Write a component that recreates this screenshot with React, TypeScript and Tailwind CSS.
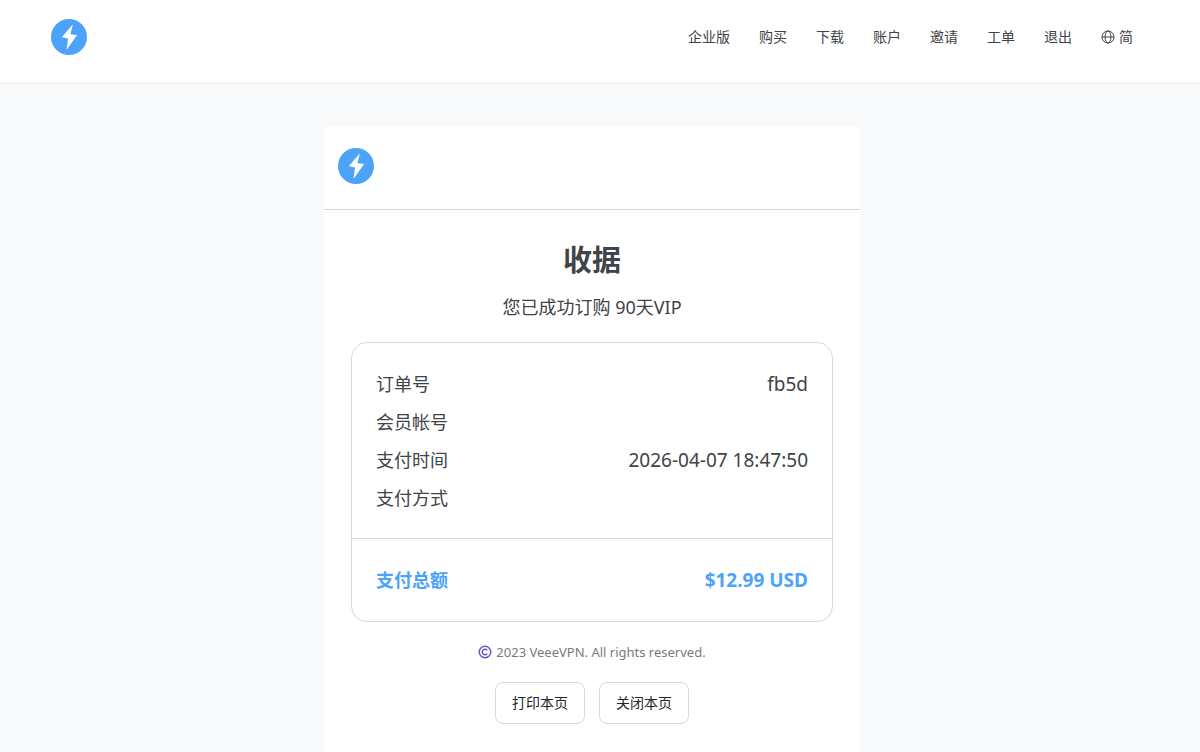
type LogoProps = {
  className?: string;
};

const Logo = ({ className }: LogoProps) => (
  <svg viewBox="0 0 36 36" className={className} aria-hidden="true">
    <circle cx="18" cy="18" r="18" fill="#4da3f9" />
    <path d="M21.9 5.3 10.8 18.2 17 19.5 15.5 31 26.1 15.9 19.4 15.2Z" fill="#fff" />
  </svg>
);

const GlobeIcon = () => (
  <svg viewBox="0 0 14 14" className="size-3.5" fill="none" stroke="currentColor" aria-hidden="true">
    <circle cx="7" cy="7" r="6" />
    <ellipse cx="7" cy="7" rx="2.9" ry="6" />
    <path d="M1 7H13" />
  </svg>
);

const CopyrightIcon = () => (
  <svg viewBox="0 0 14 14" className="size-3.5" fill="none" stroke="#6c55c4" strokeWidth="1.4" aria-hidden="true">
    <circle cx="7" cy="7" r="5.8" />
    <path d="M9.2 5.2A2.8 2.8 0 1 0 9.2 8.8" strokeWidth="1.5" />
  </svg>
);

const navLinks = ["企业版", "购买", "下载", "账户", "邀请", "工单", "退出"];

const orderRows = [
  { label: "订单号", value: "fb5d" },
  { label: "会员帐号", value: "" },
  { label: "支付时间", value: "2026-04-07 18:47:50" },
  { label: "支付方式", value: "" },
];

const Header = () => (
  <header className="flex h-21 items-start justify-between border-b border-[#e6e8ea] bg-white pt-[19px] pr-[67px] pl-[51px]">
    <a href="#" aria-label="VeeeVPN">
      <Logo className="size-9" />
    </a>
    <nav className="flex h-9 items-center gap-[29px] text-sm">
      {navLinks.map((title) => (
        <a key={title} href="#">
          {title}
        </a>
      ))}
      <button type="button" className="flex items-center gap-1">
        <GlobeIcon />
        简
      </button>
    </nav>
  </header>
);

const Receipt = () => (
  <section className="w-full max-w-[536px] bg-white pb-10">
    <div className="border-b border-[#d3d5d8] px-3.5 pt-[21px] pb-[25px]">
      <Logo className="size-9" />
    </div>

    <div className="px-[27px] pt-7 text-center">
      <h1 className="text-[29px] leading-11 font-bold">收据</h1>
      <p className="mt-[11px] text-lg leading-7">您已成功订购 90天VIP</p>

      <table className="mt-[21px] w-full border-separate border-spacing-0 rounded-2xl border border-[#d6d8da] text-lg leading-[22px]">
        <tbody>
          <tr aria-hidden="true">
            <td colSpan={2} className="h-[22px]"></td>
          </tr>
          {orderRows.map((row) => (
            <tr key={row.label} className="h-[38px]">
              <th scope="row" className="pl-6 text-left font-normal">
                {row.label}
              </th>
              <td className="pr-6 text-right text-[19px]">{row.value}</td>
            </tr>
          ))}
          <tr aria-hidden="true">
            <td colSpan={2} className="h-[21px]"></td>
          </tr>
        </tbody>
        <tfoot>
          <tr className="h-[83px] font-bold text-[#4da3f9]">
            <th scope="row" className="border-t border-[#d6d8da] pl-6 text-left">
              支付总额
            </th>
            <td className="border-t border-[#d6d8da] pr-6 text-right text-[19px]">$12.99 USD</td>
          </tr>
        </tfoot>
      </table>

      <p className="mt-5 flex items-center justify-center gap-1 text-[13px] leading-5 text-[#777a7e]">
        <CopyrightIcon />
        2023 VeeeVPN. All rights reserved.
      </p>

      <div className="mt-5 flex justify-center gap-3.5 text-sm text-[#212529]">
        <button type="button" onClick={() => window.print()} className="h-[42px] rounded-lg border border-[#d6d8da] px-4">
          打印本页
        </button>
        <button type="button" onClick={() => window.close()} className="h-[42px] rounded-lg border border-[#d6d8da] px-4">
          关闭本页
        </button>
      </div>
    </div>
  </section>
);

const App = () => {
  return (
    <div className="min-h-screen bg-[#f9fafc] font-['Noto_Sans','Noto_Sans_CJK_SC',sans-serif] text-[#404347]">
      <Header />
      <main className="flex justify-center pt-[43px] pr-4">
        <Receipt />
      </main>
    </div>
  );
};

export default App;
